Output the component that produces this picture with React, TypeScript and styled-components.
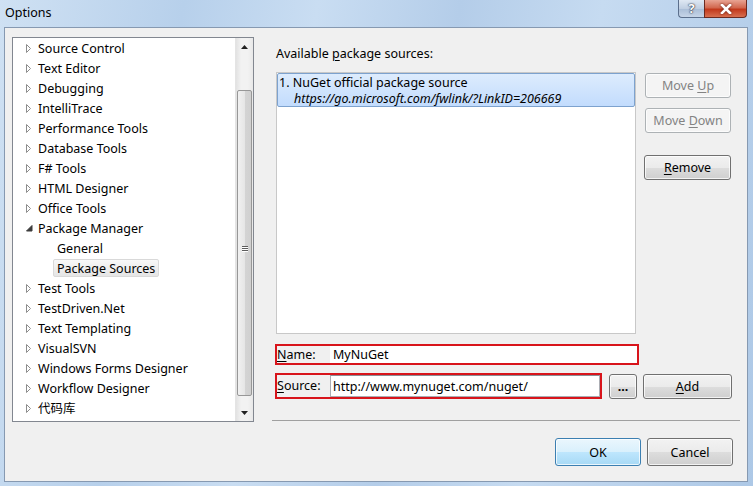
import React from 'react'
import styled, { createGlobalStyle } from 'styled-components'

const GlobalStyle = createGlobalStyle`
  html, body {
    margin: 0;
    padding: 0;
    width: 753px;
    height: 486px;
    overflow: hidden;
    font-family: "Noto Sans", "Noto Sans CJK SC", sans-serif;
    font-size: 12.5px;
    color: #000;
  }
`

const treeItems: { label: string; depth: number; state?: 'open' | 'closed' | 'none'; selected?: boolean }[] = [
  { label: 'Source Control', depth: 0, state: 'closed' },
  { label: 'Text Editor', depth: 0, state: 'closed' },
  { label: 'Debugging', depth: 0, state: 'closed' },
  { label: 'IntelliTrace', depth: 0, state: 'closed' },
  { label: 'Performance Tools', depth: 0, state: 'closed' },
  { label: 'Database Tools', depth: 0, state: 'closed' },
  { label: 'F# Tools', depth: 0, state: 'closed' },
  { label: 'HTML Designer', depth: 0, state: 'closed' },
  { label: 'Office Tools', depth: 0, state: 'closed' },
  { label: 'Package Manager', depth: 0, state: 'open' },
  { label: 'General', depth: 1, state: 'none' },
  { label: 'Package Sources', depth: 1, state: 'none', selected: true },
  { label: 'Test Tools', depth: 0, state: 'closed' },
  { label: 'TestDriven.Net', depth: 0, state: 'closed' },
  { label: 'Text Templating', depth: 0, state: 'closed' },
  { label: 'VisualSVN', depth: 0, state: 'closed' },
  { label: 'Windows Forms Designer', depth: 0, state: 'closed' },
  { label: 'Workflow Designer', depth: 0, state: 'closed' },
  { label: '代码库', depth: 0, state: 'closed' },
]

const Expander = ({ state }: { state?: 'open' | 'closed' | 'none' }) => {
  if (state === 'closed') {
    return (
      <ExpanderBox>
        <svg width="6" height="9" viewBox="0 0 6 9">
          <path d="M0.5 0.5 L4.5 4.5 L0.5 8.5 Z" fill="#fff" stroke="#8c8c8c" strokeWidth="1" />
        </svg>
      </ExpanderBox>
    )
  }
  if (state === 'open') {
    return (
      <ExpanderBox>
        <svg width="7" height="7" viewBox="0 0 7 7">
          <path d="M6 0.5 L6 6 L0.5 6 Z" fill="#3c3c3c" stroke="#3c3c3c" strokeWidth="1" />
        </svg>
      </ExpanderBox>
    )
  }
  return <ExpanderBox />
}

const U = ({ children }: { children: React.ReactNode }) => <Under>{children}</Under>

const App = () => {
  return (
    <Window>
      <GlobalStyle />
      <TitleBar>
        <Title>Options</Title>
        <Caption>
          <HelpBtn>?</HelpBtn>
          <CloseBtn>
            <svg width="12" height="10" viewBox="0 0 12 10">
              <path d="M2 1 L10 9 M10 1 L2 9" stroke="#fff" strokeWidth="2.6" strokeLinecap="square" />
            </svg>
          </CloseBtn>
        </Caption>
      </TitleBar>
      <Client>
        <Main>
          <Tree>
            <TreeList>
              {treeItems.map((it) => (
                <TreeRow key={it.label} depth={it.depth}>
                  {it.depth === 0 && <Expander state={it.state} />}
                  <TreeLabel selected={it.selected} depth={it.depth}>{it.label}</TreeLabel>
                </TreeRow>
              ))}
            </TreeList>
            <ScrollBar>
              <ArrowBtn>
                <svg width="7" height="4" viewBox="0 0 7 4"><path d="M0 4 L3.5 0 L7 4 Z" fill="#222" /></svg>
              </ArrowBtn>
              <Track>
                <Thumb>
                  <Grip>
                    <span /><span /><span />
                  </Grip>
                </Thumb>
              </Track>
              <ArrowBtn>
                <svg width="7" height="4" viewBox="0 0 7 4"><path d="M0 0 L3.5 4 L7 0 Z" fill="#222" /></svg>
              </ArrowBtn>
            </ScrollBar>
          </Tree>
          <Panel>
            <SectionLabel>Available <U>p</U>ackage sources:</SectionLabel>
            <SourcesRow>
              <ListBox>
                <ListItem>
                  <div>1. NuGet official package source</div>
                  <ItemUrl>https://go.microsoft.com/fwlink/?LinkID=206669</ItemUrl>
                </ListItem>
              </ListBox>
              <SideButtons>
                <Button disabled width={86}>Move <U>U</U>p</Button>
                <Button disabled width={86}>Move <U>D</U>own</Button>
                <Button width={87} style={{ marginTop: 12, marginLeft: -1 }}>
                  <U>R</U>emove
                </Button>
              </SideButtons>
            </SourcesRow>
            <NameLine>
              <Marked width={364} height={21}>
                <FieldLabel><U>N</U>ame:</FieldLabel>
                <PlainInput value="MyNuGet" readOnly />
              </Marked>
            </NameLine>
            <SourceLine>
              <Marked width={327} height={26}>
                <FieldLabel><U>S</U>ource:</FieldLabel>
                <BoxInput value="http://www.mynuget.com/nuget/" readOnly />
              </Marked>
              <Button width={28} height={25} bold>...</Button>
              <Button width={89} height={25}><U>A</U>dd</Button>
            </SourceLine>
          </Panel>
        </Main>
        <Footer>
          <Button width={86} height={28} primary>OK</Button>
          <Button width={86} height={28}>Cancel</Button>
        </Footer>
      </Client>
    </Window>
  )
}

export default App

const Window = styled.div`
  width: 753px;
  height: 486px;
  box-sizing: border-box;
  padding: 0 5px 4px 4px;
  display: flex;
  flex-direction: column;
  background: linear-gradient(100deg, #cfe1f3 0%, #b7d0eb 22%, #c9ddf2 38%, #b4cde9 55%, #c6dbf1 72%, #adc8e6 100%);
`

const TitleBar = styled.div`
  height: 27px;
  display: flex;
  align-items: flex-start;
  justify-content: space-between;
  flex-shrink: 0;
`

const Title = styled.div`
  font-size: 12.5px;
  margin-top: 4px;
  margin-left: 1px;
  color: #000;
`

const Caption = styled.div`
  display: flex;
  margin-right: 1px;
`

const HelpBtn = styled.div`
  width: 26px;
  height: 18px;
  box-sizing: border-box;
  border: 1px solid #5b6f8c;
  border-top: none;
  border-right: none;
  border-radius: 0 0 0 4px;
  background: linear-gradient(#dfe8f3, #c0cfe2 50%, #a9bdd6 51%, #c6d5e8);
  color: #fff;
  font-weight: bold;
  font-size: 13px;
  text-align: center;
  line-height: 17px;
  text-shadow: 0 0 2px #223, 0 0 1px #112;
`

const CloseBtn = styled.div`
  width: 43px;
  height: 18px;
  box-sizing: border-box;
  border: 1px solid #6b2a20;
  border-top: none;
  border-radius: 0 0 4px 0;
  background: linear-gradient(#e8a493, #d2684f 45%, #c2391c 55%, #d86f4f);
  display: flex;
  align-items: center;
  justify-content: center;
  svg { filter: drop-shadow(0 0 1px #5a1a10); }
`

const Client = styled.div`
  flex: 1;
  background: #f0f0f0;
  border: 1px solid #8699b1;
  display: flex;
  flex-direction: column;
  padding: 9px 0 0 7px;
`

const Main = styled.div`
  display: flex;
  height: 384px;
`

const Tree = styled.div`
  width: 242px;
  height: 385px;
  box-sizing: border-box;
  border: 1px solid #828790;
  background: #fff;
  display: flex;
`

const TreeList = styled.div`
  flex: 1;
`

const TreeRow = styled.div<{ depth: number }>`
  height: 20px;
  display: flex;
  align-items: center;
  padding-left: ${(p) => (p.depth === 0 ? 13 : 40)}px;
`

const ExpanderBox = styled.span`
  width: 11px;
  display: inline-flex;
  align-items: center;
  svg { display: block; }
`

const TreeLabel = styled.span<{ selected?: boolean; depth: number }>`
  height: 18px;
  line-height: 17px;
  box-sizing: border-box;
  padding: 0 ${(p) => (p.depth === 0 ? 0 : 3)}px;
  border: 1px solid ${(p) => (p.selected ? '#d9d9d9' : 'transparent')};
  border-radius: 2px;
  background: ${(p) => (p.selected ? 'linear-gradient(#f8f8f8, #e5e5e5)' : 'transparent')};
  white-space: nowrap;
`

const ScrollBar = styled.div`
  width: 17px;
  display: flex;
  flex-direction: column;
  background: linear-gradient(90deg, #e2e2e2, #f2f2f2 30%, #f2f2f2 70%, #e8e8e8);
  border-left: 1px solid #e4e4e4;
`

const ArrowBtn = styled.div`
  height: 17px;
  display: flex;
  align-items: center;
  justify-content: center;
`

const Track = styled.div`
  flex: 1;
  padding: 35px 1px 8px 1px;
  display: flex;
`

const Thumb = styled.div`
  flex: 1;
  border: 1px solid #979797;
  border-radius: 2px;
  background: linear-gradient(90deg, #f1f1f1, #e6e6e6 50%, #d4d4d4 51%, #d0d0d0);
  display: flex;
  align-items: center;
  justify-content: center;
`

const Grip = styled.div`
  display: flex;
  flex-direction: column;
  gap: 1px;
  margin-top: 10px;
  span {
    display: block;
    width: 6px;
    height: 1px;
    background: #5d5d5d;
    box-shadow: 0 1px 0 #fff;
  }
`

const Panel = styled.div`
  margin-left: 18px;
  width: 468px;
  box-sizing: border-box;
  padding-left: 4px;
  border-bottom: 1px solid #a0a0a0;
  display: flex;
  flex-direction: column;
`

const SectionLabel = styled.div`
  margin-top: 9px;
  height: 16px;
  line-height: 16px;
  margin-bottom: 10px;
`

const Under = styled.span`
  text-decoration: underline;
  text-underline-offset: 2px;
`

const SourcesRow = styled.div`
  display: flex;
  align-items: flex-start;
`

const ListBox = styled.div`
  width: 360px;
  height: 262px;
  box-sizing: border-box;
  border: 1px solid #c8c8c8;
  background: #fff;
`

const ListItem = styled.div`
  height: 34px;
  box-sizing: border-box;
  border: 1px solid #7da2ce;
  border-radius: 2px;
  background: linear-gradient(#ddecfd, #c2dcfd);
  padding: 1px 0 0 1px;
  line-height: 16px;
`

const ItemUrl = styled.div`
  font-style: italic;
  padding-left: 15px;
`

const SideButtons = styled.div`
  display: flex;
  flex-direction: column;
  gap: 10px;
  margin-left: 9px;
  margin-top: 1px;
`

const Button = styled.button<{ width: number; height?: number; primary?: boolean; bold?: boolean }>`
  width: ${(p) => p.width}px;
  height: ${(p) => p.height ?? 25}px;
  box-sizing: border-box;
  font-family: "Noto Sans", sans-serif;
  font-size: 12.5px;
  font-weight: ${(p) => (p.bold ? 'bold' : 'normal')};
  color: #000;
  padding: 0;
  border-radius: 3px;
  border: 1px solid ${(p) => (p.primary ? '#3c7fb1' : '#707070')};
  background: ${(p) =>
    p.primary
      ? 'linear-gradient(#eaf6fd, #d9f0fc 50%, #bee6fd 51%, #a7d9f5)'
      : 'linear-gradient(#f2f2f2, #ebebeb 50%, #dddddd 51%, #cfcfcf)'};
  box-shadow: inset 0 0 0 1px rgba(255, 255, 255, 0.75);
  &:disabled {
    color: #838383;
    border-color: #adb2b5;
    background: #f4f4f4;
  }
`

const NameLine = styled.div`
  display: flex;
  margin-top: 10px;
`

const Marked = styled.div<{ width: number; height: number }>`
  width: ${(p) => p.width}px;
  height: ${(p) => p.height}px;
  box-sizing: border-box;
  border: 2px solid #d8141b;
  margin-left: -1px;
  display: flex;
  align-items: center;
`

const FieldLabel = styled.div`
  width: 53px;
  flex-shrink: 0;
  line-height: 16px;
`

const PlainInput = styled.input`
  flex: 1;
  height: 17px;
  border: none;
  outline: none;
  background: #fff;
  font-family: "Noto Sans", sans-serif;
  font-size: 12.5px;
  padding: 0 3px;
  margin: 0;
  color: #000;
`

const BoxInput = styled.input`
  flex: 1;
  height: 22px;
  box-sizing: border-box;
  border: 1px solid #abadb3;
  border-top-color: #8a8e95;
  outline: none;
  background: #fff;
  font-family: "Noto Sans", sans-serif;
  font-size: 12.5px;
  padding: 0 2px;
  margin: 0;
  color: #000;
`

const SourceLine = styled.div`
  display: flex;
  align-items: center;
  gap: 6px;
  margin-top: 8px;
  & > button:nth-of-type(1) { margin-left: 1px; }
`

const Footer = styled.div`
  display: flex;
  justify-content: flex-end;
  gap: 6px;
  padding: 17px 14px 0 0;
`
